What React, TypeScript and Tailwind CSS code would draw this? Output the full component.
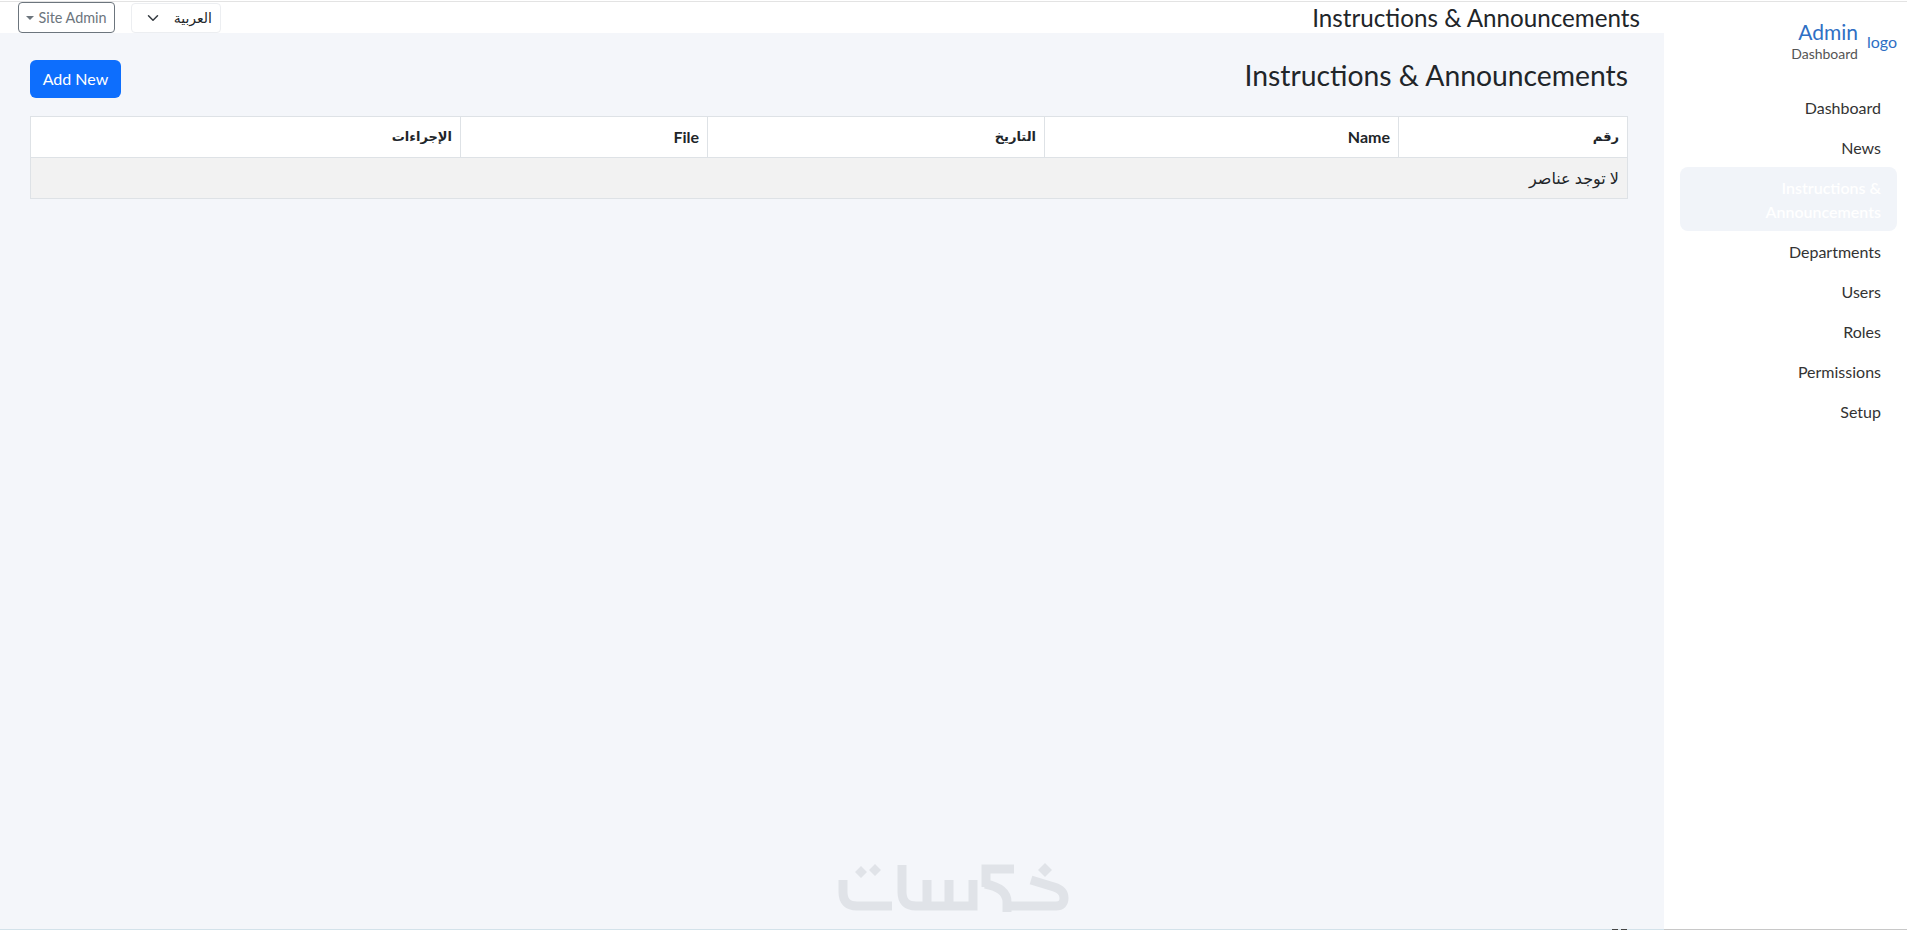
import React from "react";

const navItems = ["Dashboard", "News", "Instructions & Announcements", "Departments", "Users", "Roles", "Permissions", "Setup"];
const cols = [
  { label: "رقم", w: "w-[229px]", ar: true },
  { label: "Name", w: "w-[354px]", ar: false },
  { label: "التاريخ", w: "w-[337px]", ar: true },
  { label: "File", w: "w-[247px]", ar: false },
  { label: "الإجراءات", w: "", ar: true },
];

function Watermark() {
  return (
    <svg className="absolute left-[830px] top-[853px]" width="240" height="60" viewBox="830 855 240 60" fill="none" stroke="#e0e3e8" strokeWidth="9">
      <path d="M843 880V892Q843 906 857 906H892" />
      <path d="M861 866L867 872L861 878L855 872Z M875 864L881 870L875 876L869 870Z" fill="#e0e3e8" stroke="none" />
      <path d="M902 865V892Q902 906 916 906H973V880" />
      <path d="M927 880V906" />
      <path d="M949 880V906" />
      <path d="M1014 869H986V887" />
      <path d="M985 884Q1007 888 1007 902V912" />
      <path d="M1007 906H1056Q1064 906 1064 898Q1064 890 1054 887L1031 880" />
      <path d="M1045 863L1052 870L1045 877L1038 870Z" fill="#e0e3e8" stroke="none" />
    </svg>
  );
}

export default function App() {
  return (
    <div dir="rtl" className="flex h-[930px] w-[1907px] flex-col overflow-hidden bg-white pt-[1px] font-['Lato','DejaVu_Sans',sans-serif] text-[#212529]">
      <div className="h-[1px] shrink-0 bg-[#e3e3e3]" />
      <div className="flex min-h-0 flex-1">
        <aside className="flex w-[243px] shrink-0 flex-col border-b border-[#c8c8c8]">
          <div className="flex h-[86px] items-start gap-[9px] pr-[10px] pt-[17px]">
            <span className="mt-[11px] text-base text-[#2f6fc4]">logo</span>
            <div className="flex flex-col items-start">
              <span className="text-[21px] leading-[26px] text-[#2f6fc4]">Admin</span>
              <span className="text-sm leading-[18px] text-[#555]">Dashboard</span>
            </div>
          </div>
          <nav className="flex flex-col pl-[16px] pr-[10px]">
            {navItems.map((n) => {
              const active = n.startsWith("Instructions");
              return (
                <a key={n} className={active
                  ? "mb-[1px] mt-[-1px] rounded-lg bg-[#f1f4f9] px-4 pb-[7px] pt-[9px] text-base font-semibold leading-6 text-white"
                  : "px-4 py-2 text-base leading-6 text-[#333]"}>
                  {n}
                </a>
              );
            })}
          </nav>
        </aside>

        <div className="relative flex min-w-0 flex-1 flex-col">
          <header className="flex h-[31px] shrink-0 items-center justify-between bg-white pr-6">
            <h2 className="mt-[2px] text-[24.2px] font-normal leading-none text-[#212529]">Instructions &amp; Announcements</h2>
            <div className="flex items-center gap-4 pl-[18px]">
              <div className="flex h-[30px] w-[90px] items-center justify-between rounded border border-[#eceef1] bg-white pl-[15px] pr-2 text-sm">
                <span>العربية</span>
                <svg width="16" height="16" viewBox="0 0 16 16" fill="none" stroke="#343a40" strokeWidth="2" strokeLinecap="round" strokeLinejoin="round" className="h-3 w-3"><path d="M2 5l6 6 6-6" /></svg>
              </div>
              <button className="flex h-[31px] w-[97px] items-center justify-center gap-1 rounded border border-[#6c757d] bg-white text-[14.4px] text-[#6c757d]">
                <span>Site Admin</span>
                <span className="mt-[1px] h-0 w-0 border-x-[4px] border-t-[4px] border-x-transparent border-t-[#6c757d]" />
              </button>
            </div>
          </header>
          <main className="flex-1 border-b border-[#d3e2ea] bg-[#f4f6fa] pl-[30px] pr-[36px] pt-[27px]">
            <div className="flex h-[38px] items-center justify-between">
              <h1 className="mb-[7px] text-[28.3px] font-normal leading-none text-[#212529]">Instructions &amp; Announcements</h1>
              <button className="h-[38px] w-[91px] rounded-md bg-[#0d6efd] text-base text-white">Add New</button>
            </div>
            <table className="mt-[18px] w-full table-fixed border-collapse text-right text-base">
              <thead>
                <tr className="h-[41px] bg-white">
                  {cols.map((c) => (
                    <th key={c.label} className={`border border-[#dee2e6] px-2 font-bold ${c.ar ? "text-[13px]" : ""} ${c.w}`}>{c.label}</th>
                  ))}
                </tr>
              </thead>
              <tbody>
                <tr className="h-[41px] bg-[#f2f2f2]">
                  <td colSpan={5} className="border border-[#dee2e6] px-2 text-base text-[#212529]">لا توجد عناصر</td>
                </tr>
              </tbody>
            </table>
          </main>
          <Watermark />
          <span className="absolute bottom-0 left-[1612px] h-[1px] w-[6px] bg-[#444]" />
          <span className="absolute bottom-0 left-[1621px] h-[1px] w-[6px] bg-[#444]" />
        </div>
      </div>
    </div>
  );
}
